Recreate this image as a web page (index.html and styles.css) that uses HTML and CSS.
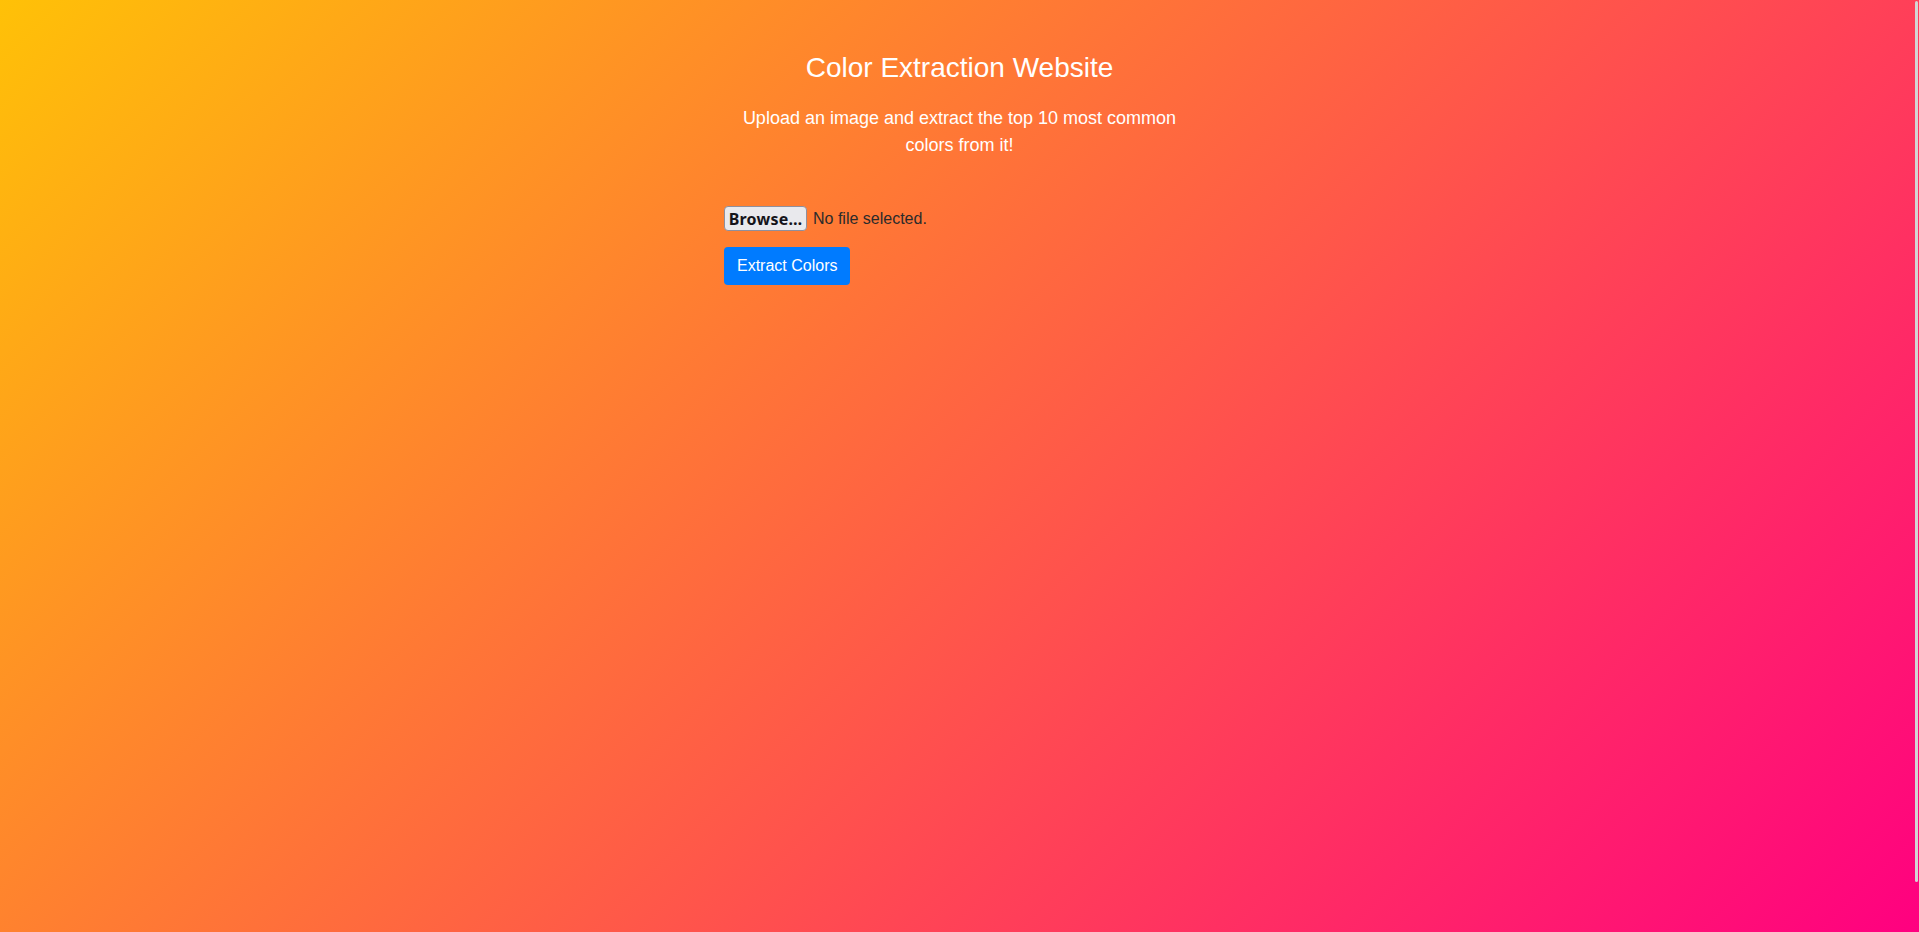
FILE: index.html
```html
<!DOCTYPE html>
<html lang="en">
<head>
<meta charset="utf-8">
<title>Color Extraction Website</title>
<link rel="stylesheet" href="styles.css">
</head>
<body>
  <main class="container">
    <h1 class="title">Color Extraction Website</h1>
    <p class="subtitle">Upload an image and extract the top 10 most common colors from it!</p>
    <form class="upload-form">
      <label class="file-picker">
        <span class="browse-btn">Browse…</span>
        <span class="file-status">No file selected.</span>
      </label>
      <div class="actions">
        <button type="button" class="extract-btn">Extract Colors</button>
      </div>
    </form>
  </main>
  <div class="scroll-thumb"></div>
</body>
</html>
```

FILE: styles.css
```css
html {
  height: 100%;
}

body {
  margin: 0;
  min-height: 100%;
  background: linear-gradient(135deg, #ffc107 0%, #ff0080 100%);
  background-attachment: fixed;
  font-family: "Liberation Sans", Arial, sans-serif;
  color: #ffffff;
}

.container {
  width: 471px;
  margin: 0 auto;
  padding-top: 52px;
}

.title {
  margin: 0;
  font-size: 28px;
  font-weight: 400;
  line-height: normal;
  text-align: center;
}

.subtitle {
  margin: 21px 0 0;
  font-size: 18px;
  line-height: 27px;
  text-align: center;
}

.upload-form {
  margin-top: 47px;
  display: flex;
  flex-direction: column;
  gap: 16px;
}

.file-picker {
  display: flex;
  align-items: center;
  gap: 6px;
  height: 25px;
}

.browse-btn {
  box-sizing: border-box;
  width: 83px;
  height: 25px;
  padding: 0 4px;
  display: inline-flex;
  align-items: center;
  justify-content: center;
  background: #e9e9ed;
  border: 1px solid #8f8f9d;
  border-radius: 4px;
  color: #15141a;
  font-family: "Noto Sans", "DejaVu Sans", sans-serif;
  font-weight: 700;
  font-size: 16px;
  letter-spacing: 0.2px;
}

.file-status {
  font-size: 16px;
  color: #2b2b2b;
}

.actions {
  display: flex;
}

.extract-btn {
  box-sizing: border-box;
  height: 38px;
  padding: 0 13px;
  background: #007bff;
  border: none;
  border-radius: 4px;
  color: #ffffff;
  font-family: "Liberation Sans", Arial, sans-serif;
  font-size: 16px;
  cursor: pointer;
}

.scroll-thumb {
  position: fixed;
  top: 1px;
  right: 1px;
  width: 3px;
  height: 881px;
  background: #d4d4d4;
  border-radius: 2px;
}
```
